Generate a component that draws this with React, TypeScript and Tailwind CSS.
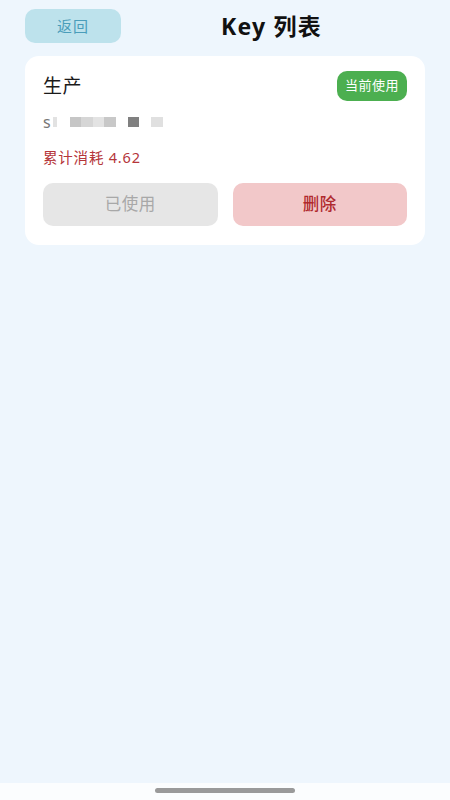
import React from 'react'

const font = { fontFamily: '"Noto Sans", "Noto Sans CJK SC", sans-serif' }

// masked key preview: grey blocks like the blurred screenshot
const blocks = [
  { w: 'w-[11px]', c: 'bg-[#c6c6c6]' },
  { w: 'w-[12px]', c: 'bg-[#d6d6d6]' },
  { w: 'w-[11px]', c: 'bg-[#e3e3e3]' },
  { w: 'w-[12px]', c: 'bg-[#c8c8c8]' },
]

export default function App() {
  return (
    <div className="min-h-screen bg-[#eef6fd] flex flex-col" style={font}>
      <div className="flex-1 px-[25px] pt-[9px]">
        {/* Header */}
        <div className="flex items-center h-[34px]">
          <button className="w-[96px] h-[34px] rounded-[10px] bg-[#bde2ec] text-[#4a9dba] text-[15px] tracking-[1px]">
            返回
          </button>
          <h1 className="ml-[100px] text-[23px] font-bold text-[#111] tracking-[1.2px]">Key 列表</h1>
        </div>

        {/* Key card */}
        <div className="mt-[13px] bg-white rounded-[14px] px-[18px] pt-[15px] pb-[19px]">
          <div className="flex items-center justify-between">
            <span className="text-[19px] text-[#1a1a1a] leading-[28px] tracking-[0.5px]">生产</span>
            <span className="h-[30px] px-[8px] rounded-[10px] bg-[#4caf50] text-white text-[13px] tracking-[0.5px] flex items-center">
              当前使用
            </span>
          </div>

          <div className="mt-[11px] flex items-center h-[20px]">
            <span className="text-[16px] text-[#777] leading-none">s</span>
            <span className="w-[4px] h-[10px] bg-[#e2e2e2] ml-[2px]" />
            <span className="flex ml-[13px]">
              {blocks.map((b, i) => (
                <span key={i} className={`${b.w} h-[10px] ${b.c}`} />
              ))}
            </span>
            <span className="w-[11px] h-[10px] bg-[#808080] ml-[12px]" />
            <span className="w-[12px] h-[10px] bg-[#e0e0e0] ml-[12px]" />
          </div>

          <div className="mt-[15px] text-[14.5px] text-[#b5363a] leading-[20px] tracking-[0.8px]">累计消耗 4.62</div>

          <div className="mt-[16px] flex gap-[15px]">
            <button className="flex-1 h-[43px] rounded-[10px] bg-[#e6e6e6] text-[#a8a8a8] text-[16.5px] tracking-[0.5px]">
              已使用
            </button>
            <button className="flex-1 h-[43px] rounded-[10px] bg-[#f2c8c9] text-[#b02a2e] text-[16.5px] font-medium tracking-[0.5px]">
              删除
            </button>
          </div>
        </div>
      </div>

      {/* Home indicator */}
      <div className="h-[17px] bg-[#fbfdfe] flex items-start justify-center pt-[5px]">
        <div className="w-[140px] h-[5px] rounded-full bg-[#9a9a9a]" />
      </div>
    </div>
  )
}
